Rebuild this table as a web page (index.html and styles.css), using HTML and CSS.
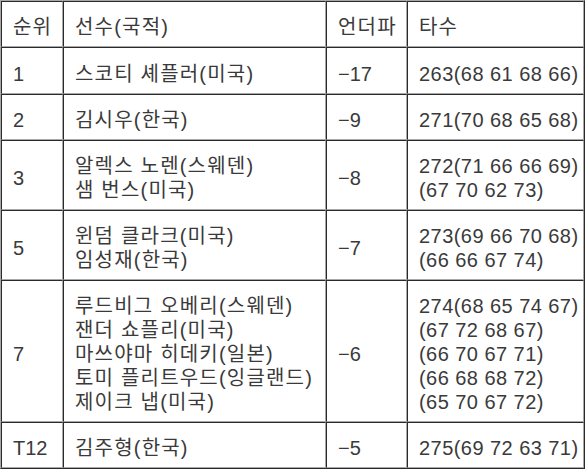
FILE: index.html
```html
<!DOCTYPE html>
<html lang="ko">
<head>
<meta charset="utf-8">
<title>순위표</title>
<link rel="stylesheet" href="styles.css">
</head>
<body>
<table class="board">
  <colgroup>
    <col class="c-rank">
    <col class="c-name">
    <col class="c-par">
    <col class="c-score">
  </colgroup>
  <tr class="r1">
    <th class="ko">순위</th>
    <th class="ko">선수(국적)</th>
    <th class="ko">언더파</th>
    <th class="ko">타수</th>
  </tr>
  <tr class="r1b">
    <td>1</td>
    <td class="ko">스코티 셰플러(미국)</td>
    <td>−17</td>
    <td class="num">263(68 61 68 66)</td>
  </tr>
  <tr class="r1">
    <td>2</td>
    <td class="ko">김시우(한국)</td>
    <td>−9</td>
    <td class="num">271(70 68 65 68)</td>
  </tr>
  <tr class="r2">
    <td>3</td>
    <td class="ko">알렉스 노렌(스웨덴)<br>샘 번스(미국)</td>
    <td>−8</td>
    <td class="num">272(71 66 66 69)<br>(67 70 62 73)</td>
  </tr>
  <tr class="r2">
    <td>5</td>
    <td class="ko">윈덤 클라크(미국)<br>임성재(한국)</td>
    <td>−7</td>
    <td class="num">273(69 66 70 68)<br>(66 66 67 74)</td>
  </tr>
  <tr class="r5">
    <td>7</td>
    <td class="ko">루드비그 오베리(스웨덴)<br>잰더 쇼플리(미국)<br>마쓰야마 히데키(일본)<br>토미 플리트우드(잉글랜드)<br>제이크 냅(미국)</td>
    <td>−6</td>
    <td class="num">274(68 65 74 67)<br>(67 72 68 67)<br>(66 70 67 71)<br>(66 68 68 72)<br>(65 70 67 72)</td>
  </tr>
  <tr class="r1">
    <td>T12</td>
    <td class="ko">김주형(한국)</td>
    <td>−5</td>
    <td class="num">275(69 72 63 71)</td>
  </tr>
</table>
</body>
</html>
```
FILE: styles.css
```css
html, body {
  margin: 0;
  padding: 0;
  background: #ffffff;
}

.board {
  width: 585px;
  table-layout: fixed;
  border-collapse: separate;
  border-spacing: 0;
  border: 1px solid;
  border-color: #a8a8a8 #2a2a2a #2a2a2a #a8a8a8;
  font-family: "Liberation Sans", "Noto Sans CJK KR", sans-serif;
  font-size: 20px;
  font-weight: 400;
  line-height: 24px;
  color: #3a3a3a;
}

.c-rank { width: 62px; }
.c-name { width: 263px; }
.c-par { width: 81px; }
.c-score { width: 177px; }

.board th,
.board td {
  box-sizing: border-box;
  border: 1px solid;
  border-color: #2a2a2a #a8a8a8 #a8a8a8 #2a2a2a;
  text-align: left;
  font-weight: 400;
  vertical-align: middle;
  padding: 13px 0 7px 11px;
  white-space: nowrap;
}

.board .ko {
  letter-spacing: 1.2px;
}

.board .num {
  letter-spacing: 0.45px;
}

.r1 { height: 46px; }
.r1b { height: 47px; }
.r2 { height: 70px; }
.r5 { height: 142px; }
```
